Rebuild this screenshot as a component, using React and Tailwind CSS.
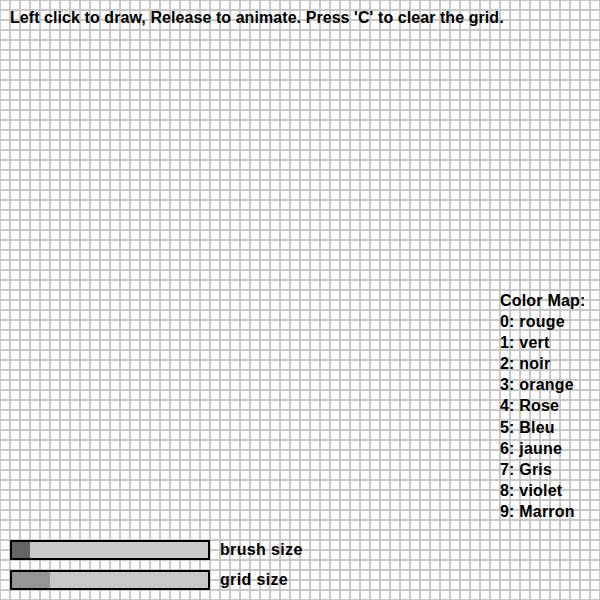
import React from 'react';

const colorMap = ['rouge', 'vert', 'noir', 'orange', 'Rose', 'Bleu', 'jaune', 'Gris', 'violet', 'Marron'];

const sliders = [
  { label: 'brush size', fill: 'bg-[#646464]', width: 18 },
  { label: 'grid size', fill: 'bg-[#969696]', width: 38 },
];

export default function App() {
  return (
    <div className="w-[600px] h-[600px] flex flex-col bg-white bg-[linear-gradient(to_right,#c8c8c8_1px,transparent_1px,transparent_9px,#c8c8c8_9px),linear-gradient(to_bottom,#c8c8c8_1px,transparent_1px,transparent_9px,#c8c8c8_9px)] bg-[size:10px_10px] font-['Liberation_Sans',Arial,sans-serif] font-bold text-[16px] text-black">
      <p className="pt-[8px] pl-[10px] leading-[20px] whitespace-nowrap tracking-[0.07px]">
        Left click to draw, Release to animate. Press 'C' to clear the grid.
      </p>

      <div className="flex-1 flex justify-end items-end">
        <div className="w-[100px] leading-[21.1px] whitespace-nowrap tracking-[0.2px]">
          <div>Color Map:</div>
          {colorMap.map((name, i) => (
            <div key={name}>{i}: {name}</div>
          ))}
        </div>
      </div>

      <div className="mt-[18px] pl-[10px] pb-[10px] flex flex-col gap-[10px]">
        {sliders.map((s) => (
          <div key={s.label} className="flex items-center">
            <div className="w-[200px] h-[20px] border-2 border-black bg-[#c8c8c8] flex">
              <div className={`h-full ${s.fill}`} style={{ width: s.width }} />
            </div>
            <span className="ml-[10px] leading-[20px] tracking-[0.35px]">{s.label}</span>
          </div>
        ))}
      </div>
    </div>
  );
}
